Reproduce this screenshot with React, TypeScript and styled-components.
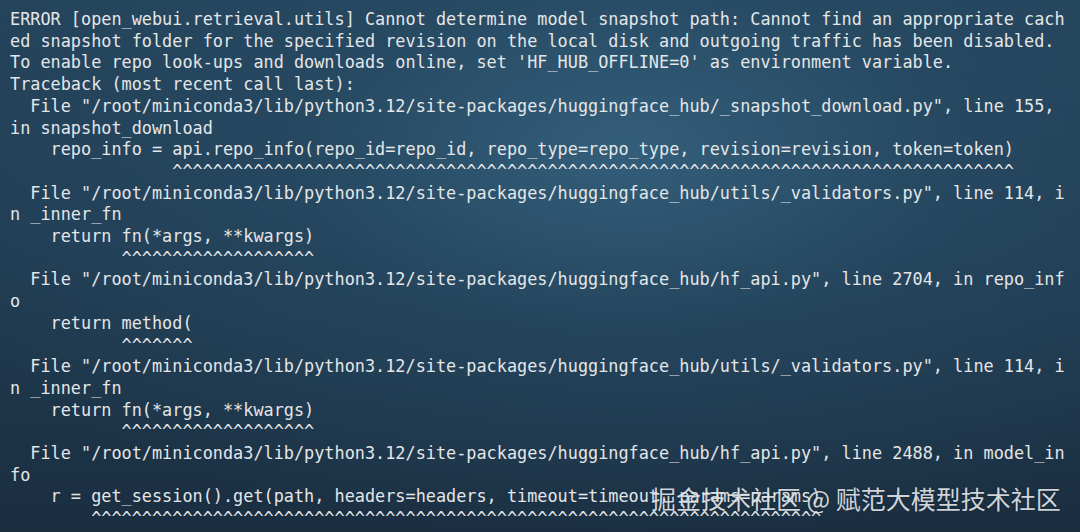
import React from "react";
import styled, { createGlobalStyle } from "styled-components";

const Global = createGlobalStyle`
  html, body { margin: 0; padding: 0; }
  body { width: 1080px; height: 532px; overflow: hidden; background: #1d3448; }
`;

const Terminal = styled.div`
  position: relative;
  width: 1080px;
  height: 532px;
  box-sizing: border-box;
  padding: 9px 0 0 10px;
  overflow: hidden;
  background:
    radial-gradient(ellipse 70% 75% at 58% 28%, rgba(52, 96, 124, 0.95) 0%, rgba(40, 76, 102, 0.6) 45%, rgba(26, 46, 64, 0) 100%),
    linear-gradient(180deg, #24435a 0%, #213d53 45%, #1a2e40 100%);
`;

const Output = styled.pre`
  margin: 0;
  font-family: "DejaVu Sans Mono", monospace;
  font-size: 16.85px;
  line-height: 21.7px;
  color: #e4e6e8;
  white-space: pre;
`;

const Watermark = styled.div`
  position: absolute;
  left: 651px;
  top: 483px;
  font-family: "Noto Sans CJK SC", "Noto Sans", sans-serif;
  font-size: 25px;
  line-height: 30px;
  color: rgba(235, 238, 242, 0.88);
  text-shadow: 0 0 2px rgba(0, 0, 0, 0.35);
  white-space: nowrap;
`;

const lines = [
  "ERROR [open_webui.retrieval.utils] Cannot determine model snapshot path: Cannot find an appropriate cach",
  "ed snapshot folder for the specified revision on the local disk and outgoing traffic has been disabled.",
  "To enable repo look-ups and downloads online, set 'HF_HUB_OFFLINE=0' as environment variable.",
  "Traceback (most recent call last):",
  '  File "/root/miniconda3/lib/python3.12/site-packages/huggingface_hub/_snapshot_download.py", line 155,',
  "in snapshot_download",
  "    repo_info = api.repo_info(repo_id=repo_id, repo_type=repo_type, revision=revision, token=token)",
  "                " + "^".repeat(83),
  '  File "/root/miniconda3/lib/python3.12/site-packages/huggingface_hub/utils/_validators.py", line 114, i',
  "n _inner_fn",
  "    return fn(*args, **kwargs)",
  "           " + "^".repeat(19),
  '  File "/root/miniconda3/lib/python3.12/site-packages/huggingface_hub/hf_api.py", line 2704, in repo_inf',
  "o",
  "    return method(",
  "           " + "^".repeat(7),
  '  File "/root/miniconda3/lib/python3.12/site-packages/huggingface_hub/utils/_validators.py", line 114, i',
  "n _inner_fn",
  "    return fn(*args, **kwargs)",
  "           " + "^".repeat(19),
  '  File "/root/miniconda3/lib/python3.12/site-packages/huggingface_hub/hf_api.py", line 2488, in model_in',
  "fo",
  "    r = get_session().get(path, headers=headers, timeout=timeout, params=params)",
  "        " + "^".repeat(72),
];

export default function App() {
  return (
    <>
      <Global />
      <Terminal>
        <Output>{lines.join("\n")}</Output>
        <Watermark>掘金技术社区 @ 赋范大模型技术社区</Watermark>
      </Terminal>
    </>
  );
}
